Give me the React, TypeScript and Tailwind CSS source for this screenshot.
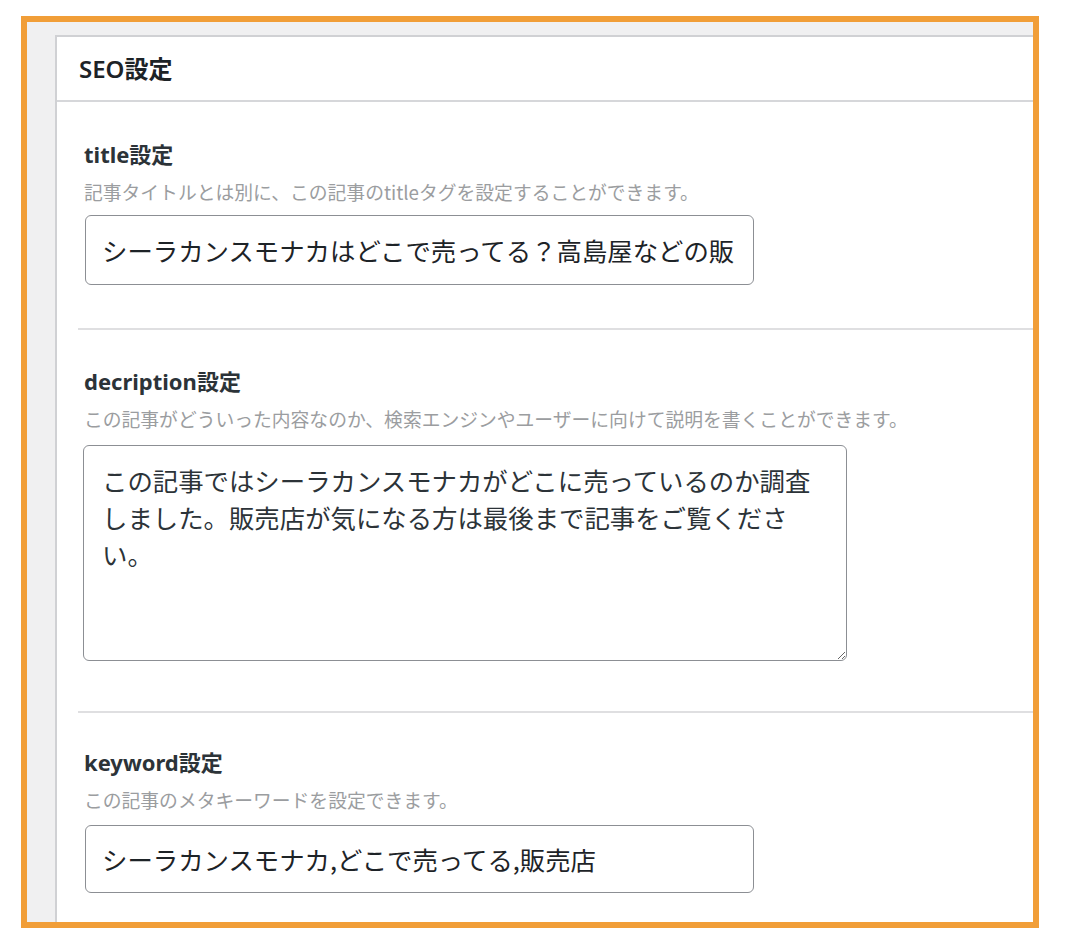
import React from "react";

const jp = { fontFamily: '"Noto Sans", "Noto Sans CJK JP", sans-serif' };
const jpOnly = { fontFamily: '"Noto Sans CJK JP", "Noto Sans", sans-serif' };

function Label({ children }: { children: React.ReactNode }) {
  return (
    <div className="h-[28px] leading-[28px] text-[22px] font-bold text-[#2c3338]" style={jp}>
      {children}
    </div>
  );
}

function Desc({ children }: { children: React.ReactNode }) {
  return (
    <div className="mt-[14px] h-[20px] leading-[20px] text-[18.8px] text-[#9b9da0] whitespace-nowrap" style={jpOnly}>
      {children}
    </div>
  );
}

export default function App() {
  return (
    <div className="w-[1068px] h-[946px] bg-white pt-[16px] pl-[21px]">
      <div className="w-[1018px] h-[912px] border-[6px] border-[#f19e38] bg-[#f0f0f1] pt-[13px] pl-[28px] overflow-hidden flex flex-col">
        <div className="flex-1 bg-white border-l-2 border-t-2 border-[#d0d1d4]">
          <div className="h-[65px] border-b-2 border-[#d6d7da] flex items-center pl-[22px]">
            <span className="text-[24px] font-semibold text-[#1d2327]" style={jp}>
              SEO設定
            </span>
          </div>
          <div className="pl-[21px]">
            <div className="pt-[38px] pb-[43px] pl-[6px] border-b-2 border-[#dfdfe1]">
              <Label>title設定</Label>
              <Desc>記事タイトルとは別に、この記事のtitleタグを設定することができます。</Desc>
              <input
                readOnly
                value="シーラカンスモナカはどこで売ってる？高島屋などの販"
                className="mt-[13px] ml-[1px] block w-[669px] h-[70px] border border-[#8c8f94] rounded-[6px] pl-[16px] pr-[8px] text-[25.4px] text-[#1d2327] bg-white outline-none"
                style={jpOnly}
              />
            </div>
            <div className="pt-[37px] pb-[50px] pl-[6px] border-b-2 border-[#dfdfe1]">
              <Label>decription設定</Label>
              <Desc>この記事がどういった内容なのか、検索エンジンやユーザーに向けて説明を書くことができます。</Desc>
              <textarea
                readOnly
                value="この記事ではシーラカンスモナカがどこに売っているのか調査しました。販売店が気になる方は最後まで記事をご覧ください。"
                className="mt-[16px] -ml-[1px] block w-[764px] h-[216px] border border-[#8c8f94] rounded-[6px] pl-[18px] pr-[26px] pt-[16px] text-[25.4px] leading-[37px] text-[#2c3338] bg-white outline-none"
                style={jpOnly}
              />
            </div>
            <div className="pt-[35px] pl-[6px]">
              <Label>keyword設定</Label>
              <Desc>この記事のメタキーワードを設定できます。</Desc>
              <input
                readOnly
                value="シーラカンスモナカ,どこで売ってる,販売店"
                className="mt-[15px] ml-[1px] block w-[669px] h-[68px] border border-[#8c8f94] rounded-[6px] pl-[16px] pr-[14px] text-[25.4px] text-[#1d2327] bg-white outline-none"
                style={jpOnly}
              />
            </div>
          </div>
        </div>
      </div>
    </div>
  );
}
